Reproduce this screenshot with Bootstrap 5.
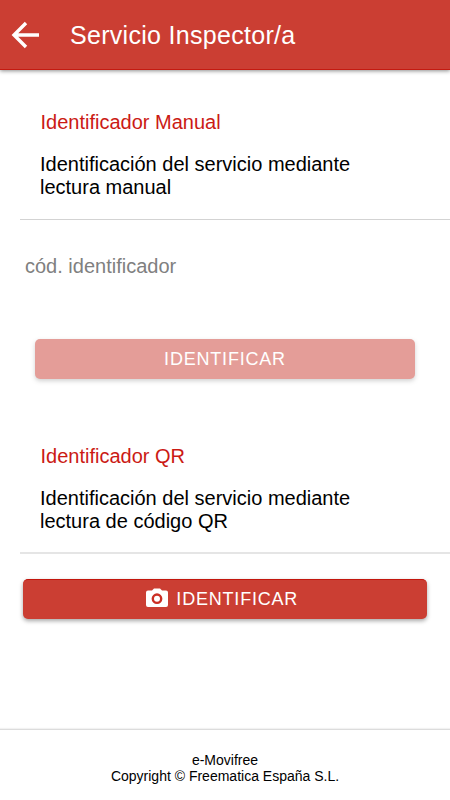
<!DOCTYPE html>
<html lang="es">
<head>
<meta charset="utf-8">
<meta name="viewport" content="width=device-width, initial-scale=1">
<title>Servicio Inspector/a</title>
<link href="https://cdn.jsdelivr.net/npm/bootstrap@5.3.0/dist/css/bootstrap.min.css" rel="stylesheet">
<style>
body{font-family:"Liberation Sans",Arial,sans-serif;font-size:20px;color:#000;background:#fff;height:800px;overflow:hidden}
.app-bar{height:70px;background:#cb3e33;border-bottom:1px solid #c41a10;box-shadow:0 1px 4px rgba(0,0,0,.45)}
.app-title{font-size:25px;line-height:30px;margin-left:29px;letter-spacing:.3px}
.back-btn{width:30px;height:30px;margin-left:11px}
.section-head{margin-left:20px;padding:0 0 21px 20px;height:110px;border-bottom:1px solid #d3d3d3}
.manual{padding-top:40px}
.lookup{padding-top:65px}
.lookup .section-head{border-bottom:2px solid #e5e5e5}
.section-title{font-size:20px;line-height:24px;margin-bottom:19px;color:#cb1a14;padding-left:.5px}
.section-text{font-size:20px;line-height:22.5px}
.code-input{padding:0;margin:34px 25px 0;width:400px;height:24px;font-size:20px;line-height:24px;color:#000}
.code-input::placeholder{color:#808080;opacity:1}
.btn-main,.btn-main:hover{height:40px;padding:0;border:0;border-radius:5px;background:#cb3e33;color:#fff;font-size:18px;line-height:40px;letter-spacing:.8px;box-shadow:0 2px 4px rgba(0,0,0,.35)}
.btn-main:disabled{background:#cb3e33;color:#fff;opacity:.5}
.btn-code{margin:61px 35px 0}
.btn-scan,.btn-scan:hover{margin:25px 23px 0 22.5px;padding:0 6px 1px 0;line-height:38px;border-top:1px solid #c3160d}
.cam-icon{width:24px;height:24px;margin-right:7px}
.app-footer{height:71px;border-top:1px solid #dcdcdc;box-shadow:0 -1px 1px rgba(0,0,0,.05);font-size:14px;line-height:16px;padding-top:22px}
</style>
</head>
<body class="d-flex flex-column">
<header class="app-bar d-flex align-items-center text-white flex-shrink-0">
<svg class="back-btn" viewBox="0 0 30 30" fill="none" stroke="#fff" stroke-width="3.400" role="img" aria-label="Volver"><path d="M28 15H4M15 3L3 15L15 27"/></svg>
<h1 class="app-title mb-0 fw-normal">Servicio Inspector/a</h1>
</header>
<main class="flex-grow-1">
<section class="manual d-flex flex-column">
<div class="section-head">
<h2 class="section-title fw-normal">Identificador Manual</h2>
<p class="section-text mb-0">Identificación del servicio mediante<br>lectura manual</p>
</div>
<input class="code-input form-control border-0 rounded-0" type="text" placeholder="cód. identificador">
<button class="btn btn-main btn-code" type="button" disabled>IDENTIFICAR</button>
</section>
<section class="lookup d-flex flex-column">
<div class="section-head">
<h2 class="section-title fw-normal">Identificador QR</h2>
<p class="section-text mb-0">Identificación del servicio mediante<br>lectura de código QR</p>
</div>
<button class="btn btn-main btn-scan d-flex align-items-center justify-content-center" type="button">
<svg class="cam-icon" viewBox="0 0 24 24"><path fill="#fff" d="M9 1.500H15L17 3.500H21Q23 3.500 23 5.500V18Q23 20 21 20H3Q1 20 1 18V5.500Q1 3.500 3 3.500H7Z"/><circle cx="12" cy="11.700" r="4.200" fill="#fff" stroke="#cb2e24" stroke-width="2.400"/></svg>
<span>IDENTIFICAR</span>
</button>
</section>
</main>
<footer class="app-footer text-center">e-Movifree<br>Copyright © Freematica España S.L.</footer>
<script src="https://cdn.jsdelivr.net/npm/bootstrap@5.3.0/dist/js/bootstrap.bundle.min.js"></script>
</body>
</html>
